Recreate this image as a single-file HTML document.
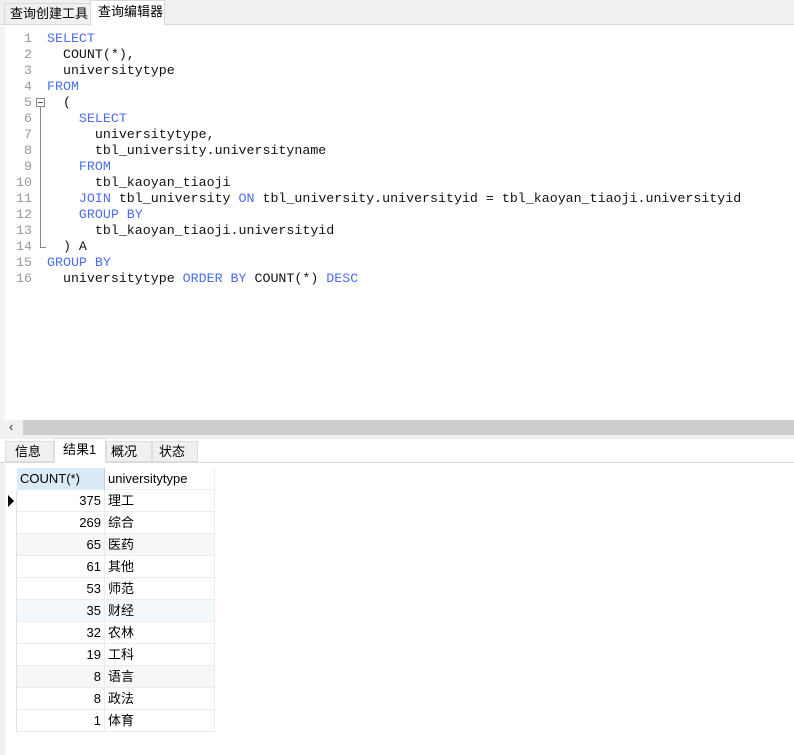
<!DOCTYPE html>
<html><head><meta charset="utf-8"><style>
*{margin:0;padding:0;box-sizing:border-box}
body{width:794px;height:755px;background:#fff;position:relative;overflow:hidden;font-family:"Liberation Sans","Noto Sans CJK SC",sans-serif;font-size:12px;color:#000}
.a{position:absolute}
.code{font-family:"Liberation Mono",monospace;font-size:13.3px;white-space:pre;line-height:16px;color:#111}
.k{color:#4a6cf0}
.ln{color:#999;width:32px;text-align:right}
.row{position:absolute;left:17px;width:198px;height:22px;border-bottom:1px solid #ececec;font-size:13px}
.row .c1{position:absolute;left:0;width:88px;height:21px;text-align:right;padding-right:3px;line-height:21px;border-right:1px solid #ececec}
.row .c2{position:absolute;left:91px;line-height:21px}
</style></head><body>
<div class="a" style="left:0;top:0;width:794px;height:25px;background:#f0f0f0;border-bottom:1px solid #d9d9d9"></div>
<div class="a" style="left:4px;top:3px;width:87px;height:22px;border:1px solid #d9d9d9;border-bottom:none;font-size:13px;line-height:20px;padding-left:5px">查询创建工具</div>
<div class="a" style="left:90px;top:0;width:75px;height:26px;background:#fff;border:1px solid #d9d9d9;border-bottom:none;font-size:13px;line-height:22px;padding-left:7px">查询编辑器</div>
<div class="a" style="left:0;top:26px;width:5px;height:394px;background:#f4f4f4"></div>
<div class="a code" style="left:0;top:31px">
<div class="ln" style="position:absolute;left:0;top:0">1
2
3
4
5
6
7
8
9
10
11
12
13
14
15
16</div>
<div style="position:absolute;left:47px;top:0"><span class="k">SELECT</span>
  COUNT(*),
  universitytype
<span class="k">FROM</span>
  (
    <span class="k">SELECT</span>
      universitytype,
      tbl_university.universityname
    <span class="k">FROM</span>
      tbl_kaoyan_tiaoji
    <span class="k">JOIN</span> tbl_university <span class="k">ON</span> tbl_university.universityid = tbl_kaoyan_tiaoji.universityid
    <span class="k">GROUP BY</span>
      tbl_kaoyan_tiaoji.universityid
  ) A
<span class="k">GROUP BY</span>
  universitytype <span class="k">ORDER BY</span> COUNT(*) <span class="k">DESC</span></div></div>
<div class="a" style="left:36px;top:98px;width:9px;height:9px;border:1px solid #888;background:#fff"><div style="position:absolute;left:1px;top:3px;width:5px;height:1px;background:#555"></div></div>
<div class="a" style="left:40px;top:107px;width:1px;height:141px;background:#888"></div>
<div class="a" style="left:40px;top:247px;width:6px;height:1px;background:#888"></div>
<div class="a" style="left:0;top:420px;width:794px;height:15px;background:#cdcdcd"></div>
<div class="a" style="left:0;top:420px;width:23px;height:15px;background:#f0f0f0;font-size:13px;line-height:14px;padding-left:9px;color:#333">‹</div>
<div class="a" style="left:0;top:435px;width:794px;height:4px;background:#f0f0f0"></div>
<div class="a" style="left:0;top:462px;width:794px;height:1px;background:#d9d9d9"></div>
<div class="a" style="left:5px;top:441px;width:49px;height:21px;background:#f0f0f0;border:1px solid #ddd;font-size:13px;line-height:20px;padding-left:9px">信息</div>
<div class="a" style="left:54px;top:438px;width:52px;height:25px;background:#fff;border:1px solid #ddd;border-bottom:none;font-size:13px;line-height:22px;padding-left:8px">结果1</div>
<div class="a" style="left:106px;top:441px;width:46px;height:21px;background:#f0f0f0;border:1px solid #ddd;font-size:13px;line-height:20px;padding-left:4px">概况</div>
<div class="a" style="left:152px;top:441px;width:46px;height:21px;background:#f0f0f0;border:1px solid #ddd;font-size:13px;line-height:20px;padding-left:6px">状态</div>
<div class="a" style="left:0;top:463px;width:5px;height:292px;background:#f0f0f0"></div>
<div class="a" style="left:5px;top:490px;width:12px;height:242px;border-right:1px solid #e0e0e0"></div>
<div class="a" style="left:17px;top:468px;width:88px;height:22px;background:#dbeaf7;border-right:1px solid #ccc;font-size:13px;line-height:22px;padding-left:3px">COUNT(*)</div>
<div class="a" style="left:105px;top:468px;width:110px;height:22px;border-right:1px solid #eee;border-bottom:1px solid #eee;font-size:13px;line-height:22px;padding-left:3px">universitytype</div>
<div class="a" style="left:8px;top:495px;width:0;height:0;border-left:6px solid #000;border-top:6px solid transparent;border-bottom:6px solid transparent"></div>
<div class="row" style="top:490px"><div class="c1">375</div><div class="c2">理工</div></div>
<div class="row" style="top:512px"><div class="c1">269</div><div class="c2">综合</div></div>
<div class="row" style="top:534px;background:#f7f7f7"><div class="c1">65</div><div class="c2">医药</div></div>
<div class="row" style="top:556px"><div class="c1">61</div><div class="c2">其他</div></div>
<div class="row" style="top:578px"><div class="c1">53</div><div class="c2">师范</div></div>
<div class="row" style="top:600px;background:#f3f8fd"><div class="c1">35</div><div class="c2">财经</div></div>
<div class="row" style="top:622px"><div class="c1">32</div><div class="c2">农林</div></div>
<div class="row" style="top:644px"><div class="c1">19</div><div class="c2">工科</div></div>
<div class="row" style="top:666px;background:#f7f7f7"><div class="c1">8</div><div class="c2">语言</div></div>
<div class="row" style="top:688px"><div class="c1">8</div><div class="c2">政法</div></div>
<div class="row" style="top:710px"><div class="c1">1</div><div class="c2">体育</div></div>
<div class="a" style="left:214px;top:490px;width:1px;height:242px;background:#ececec"></div>
</body></html>
